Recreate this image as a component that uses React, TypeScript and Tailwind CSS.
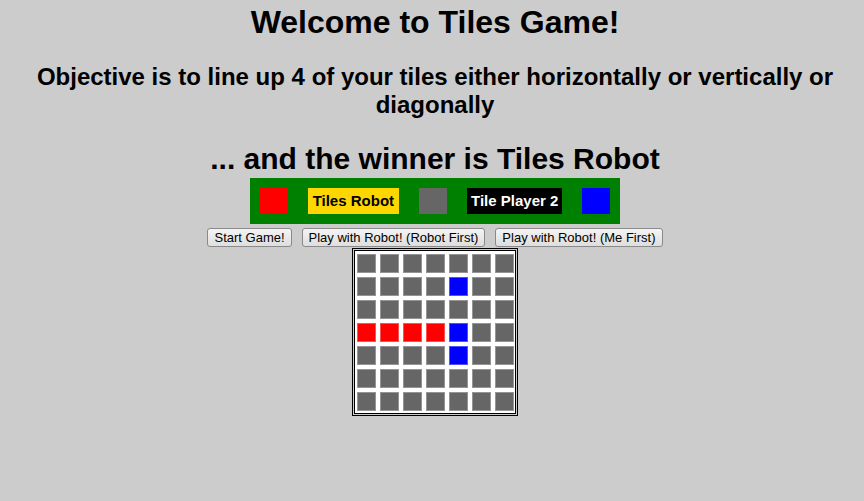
import React from 'react';

const board: string[] = [
  '.......',
  '....B..',
  '.......',
  'RRRRB..',
  '....B..',
  '.......',
  '.......',
];

const cellColor = (c: string) => {
  if (c === 'R') return 'bg-[#ff0000] border-[#ff5050]';
  if (c === 'B') return 'bg-[#0000ff] border-[#5050ff]';
  return 'bg-[#666666] border-[#959595]';
};

const GameButton = ({ label }: { label: string }) => (
  <button className="h-[19px] px-[6px] text-[13px] leading-[15px] text-black border border-[#8a8a8a] rounded-[3px] bg-gradient-to-b from-[#f4f4f4] to-[#dedede]">
    {label}
  </button>
);

const App = () => {
  return (
    <div
      className="min-h-screen bg-[#cccccc] pl-[6px] text-center text-black"
      style={{ fontFamily: '"Liberation Sans", Arial, sans-serif' }}
    >
      <h1 className="pt-[4px] text-[32px] font-bold leading-[normal]">Welcome to Tiles Game!</h1>
      <h2 className="mt-[22px] text-[24px] font-bold leading-[normal] px-[30px]">
        Objective is to line up 4 of your tiles either horizontally or vertically or diagonally
      </h2>
      <h3 className="mt-[23px] text-[30px] font-bold leading-[normal]">... and the winner is Tiles Robot</h3>

      <div className="mt-[2px] flex justify-center">
        <div className="flex items-center gap-5 bg-[#008000] px-[10px] py-[10px]">
          <div className="w-[28px] h-[26px] bg-[#ff0000]" />
          <div className="h-[26px] px-[5px] flex items-center bg-[#ffd700] text-[15px] font-bold text-black">
            Tiles Robot
          </div>
          <div className="w-[28px] h-[26px] bg-[#666666]" />
          <div className="h-[26px] px-[4px] flex items-center bg-black text-[15px] font-bold text-white">
            Tile Player 2
          </div>
          <div className="w-[28px] h-[26px] bg-[#0000ff]" />
        </div>
      </div>

      <div className="mt-[4px] flex justify-center gap-[10px]">
        <GameButton label="Start Game!" />
        <GameButton label="Play with Robot! (Robot First)" />
        <GameButton label="Play with Robot! (Me First)" />
      </div>

      <div className="mt-[1px] flex justify-center">
        <div className="grid grid-cols-7 gap-[4px] pt-[3px] pb-[2px] pl-[2px] pr-[1px] bg-white bg-clip-padding border-[3px] border-double border-black">
          {board.map((row, r) =>
            row.split('').map((c, i) => (
              <div key={`${r}-${i}`} className={`w-[19px] h-[19px] border ${cellColor(c)}`} />
            ))
          )}
        </div>
      </div>
    </div>
  );
};

export default App;
